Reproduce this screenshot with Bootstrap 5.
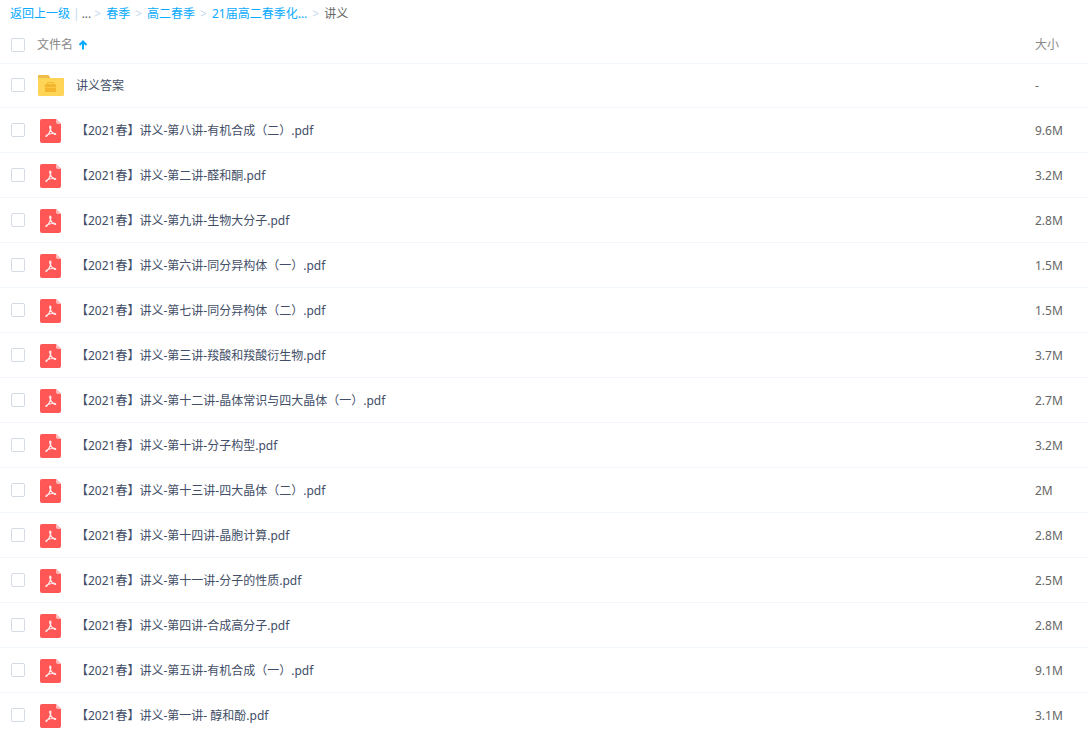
<!DOCTYPE html>
<html lang="zh-CN">
<head>
<meta charset="utf-8">
<meta name="viewport" content="width=device-width, initial-scale=1">
<title>讲义</title>
<link href="https://cdn.jsdelivr.net/npm/bootstrap@5.3.0/dist/css/bootstrap.min.css" rel="stylesheet">
<style>
  body { font: 12px/18px "Noto Sans", "Noto Sans CJK SC", sans-serif; color: #424e67; background: #fff; height: 100vh; overflow: hidden; }
  a { color: #09aaff; text-decoration: none; }
  .path-bar { height: 27px; padding: 1px 10px 0; color: #666; }
  .path-bar .sep { color: #c4d8f0; margin: 0 5px; }
  .path-bar .bar { color: #c4d8f0; margin: 0 2px 0 3px; }
  .path-bar .dots + .sep { margin-left: 3px; }
  .file-table { table-layout: fixed; margin: 0; }
  .file-table > :not(caption) > * > * { padding: 0; border-bottom: 1px solid #f2f6fd; color: inherit; background: none; vertical-align: middle; }
  .file-table thead tr { height: 36px; color: #888; }
  .file-table th { font-weight: 400; }
  .file-table tbody tr { height: 45px; }
  .file-table tbody tr.folder { height: 44px; }
  .col-check { width: 37px; }
  .col-size { width: 53px; }
  .file-table .form-check-input { width: 14px; height: 14px; margin: 0 0 0 11px; border: 1px solid #d5dbe5; border-radius: 2px; }
  .file-name { gap: 12px; padding: 2px 0 0 1px; }
  .file-name a { color: #424e67; }
  .file-name svg { width: 26px; height: 24px; }
  .size { color: #666; padding-top: 2px; }
</style>
</head>
<body>
<svg class="d-none" aria-hidden="true">
  <symbol id="pdf" viewBox="0 0 26 24">
    <path fill="#ff5656" d="M4 0h14l5 5v17a2 2 0 0 1-2 2H4a2 2 0 0 1-2-2V2a2 2 0 0 1 2-2z"/>
    <path fill="#ffbcbc" d="M18 0l5 5h-3a2 2 0 0 1-2-2z"/>
    <path fill="none" stroke="#ffe9e9" stroke-width="1.2" stroke-linecap="round" stroke-linejoin="round" d="M12.200 7c-1.100.2-.2 2.600.5 4.200.8 1.900 2.100 3.400 3.700 4.100 1.600.6 1.800-.8.200-1-2.400-.3-5.200.5-7.300 1.500-2 1-1.600 2.200-.5 1.200 1.600-1.500 3.100-4.200 3.700-6.400.4-1.600.7-3.700-.3-3.600z"/>
  </symbol>
  <symbol id="folder" viewBox="0 0 26 24">
    <path fill="#eebc48" d="M1 1h9.500l2 3H26v6H0V2a1 1 0 0 1 1-1z"/>
    <path fill="#ffd558" d="M0 4h25a1 1 0 0 1 1 1v15.500a1.500 1.500 0 0 1-1.500 1.500h-23A1.500 1.500 0 0 1 0 20.500z"/>
    <path fill="none" stroke="#f4b62f" d="M9.500 10.500V9.200q0-.7.7-.7h4.600q.7 0 .7.700v1.300"/>
    <path fill="#f4b62f" d="M8 10h9q1 0 1 1v1.200l1.500.3-1.500.5H7l-.5-.5L7 11q0-1 1-1zM7 13.500h11V17q0 1-1 1H8q-1 0-1-1z"/>
  </symbol>
</svg>

<nav class="path-bar d-flex align-items-center" aria-label="路径">
  <a href="#">返回上一级</a><span class="bar">|</span><span class="dots">...</span>
  <span class="sep">&gt;</span><a href="#">春季</a>
  <span class="sep">&gt;</span><a href="#">高二春季</a>
  <span class="sep">&gt;</span><a href="#">21届高二春季化...</a>
  <span class="sep">&gt;</span><span>讲义</span>
</nav>

<table class="table file-table">
  <thead>
    <tr>
      <th class="col-check"><input class="form-check-input d-block" type="checkbox" aria-label="全选"></th>
      <th><span class="d-flex align-items-center gap-1">文件名
        <svg width="12" height="12" viewBox="0 0 12 12" aria-hidden="true"><path fill="none" stroke="#09aaff" stroke-width="2" d="M6 10.500V3M2.500 6 6 2.500 9.500 6"/></svg></span></th>
      <th class="col-size">大小</th>
    </tr>
  </thead>
  <tbody id="files"></tbody>
</table>

<script src="https://cdn.jsdelivr.net/npm/bootstrap@5.3.0/dist/js/bootstrap.bundle.min.js"></script>
<script>
  const files = [
    ["讲义答案", "-", "folder"],
    ["【2021春】讲义-第八讲-有机合成（二）.pdf", "9.6M"],
    ["【2021春】讲义-第二讲-醛和酮.pdf", "3.2M"],
    ["【2021春】讲义-第九讲-生物大分子.pdf", "2.8M"],
    ["【2021春】讲义-第六讲-同分异构体（一）.pdf", "1.5M"],
    ["【2021春】讲义-第七讲-同分异构体（二）.pdf", "1.5M"],
    ["【2021春】讲义-第三讲-羧酸和羧酸衍生物.pdf", "3.7M"],
    ["【2021春】讲义-第十二讲-晶体常识与四大晶体（一）.pdf", "2.7M"],
    ["【2021春】讲义-第十讲-分子构型.pdf", "3.2M"],
    ["【2021春】讲义-第十三讲-四大晶体（二）.pdf", "2M"],
    ["【2021春】讲义-第十四讲-晶胞计算.pdf", "2.8M"],
    ["【2021春】讲义-第十一讲-分子的性质.pdf", "2.5M"],
    ["【2021春】讲义-第四讲-合成高分子.pdf", "2.8M"],
    ["【2021春】讲义-第五讲-有机合成（一）.pdf", "9.1M"],
    ["【2021春】讲义-第一讲- 醇和酚.pdf", "3.1M"]
  ];
  document.getElementById("files").innerHTML = files.map(([name, size, kind = "pdf"]) => `
    <tr class="${kind}">
      <td><input class="form-check-input d-block" type="checkbox" aria-label="${name}"></td>
      <td><div class="file-name d-flex align-items-center"><svg aria-hidden="true"><use href="#${kind}"/></svg><a href="#">${name}</a></div></td>
      <td><div class="size">${size}</div></td>
    </tr>`).join("");
</script>
</body>
</html>
